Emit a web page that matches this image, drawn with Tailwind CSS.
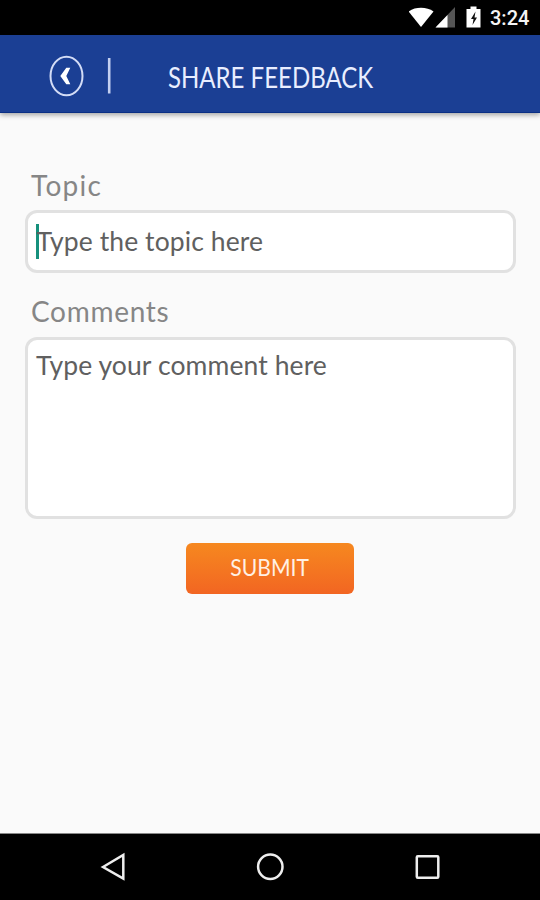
<!DOCTYPE html>
<html lang="en">
<head>
<meta charset="utf-8">
<title>Share Feedback</title>
<script src="https://cdn.jsdelivr.net/npm/@tailwindcss/browser@4"></script>
</head>
<body class="w-[540px] h-[900px] overflow-hidden flex flex-col bg-[#fafafa] font-['Lato',sans-serif]">
  <div class="h-[35px] shrink-0 bg-black flex items-start justify-end pr-[11px]">
    <svg class="w-[72px] h-[35px] mr-[9px]" viewBox="409 0 72 35">
      <path d="M408.500 11.500C415 6.500 427 6.500 433.500 11.500L421 27Z" fill="#fff"/>
      <path d="M455 7V27.500H435.500Z" fill="#555"/>
      <path d="M447.500 15V27.500H435.500Z" fill="#fff"/>
      <path d="M470.500 6.500h6v2.500h4v18.500h-14v-18.500h4z" fill="#fff"/>
      <path d="M475.500 11.500l-4.500 7.500h2.500l-1 6 4.500-7.500h-2.500z" fill="#111"/>
    </svg>
    <span class="w-[39px] font-['Roboto',sans-serif] font-medium text-[20px] leading-[36px] text-[#f4f4f4] whitespace-nowrap">3:24</span>
  </div>
  <header class="relative h-[78px] shrink-0 bg-[#1b3f94] border-b border-[#0b2f84] shadow-[0_2px_5px_rgba(0,0,0,0.35)] flex items-start">
    <svg class="w-[70px] h-[77px] ml-[45px]" viewBox="45 35 70 77" fill="none">
      <ellipse cx="66.500" cy="76" rx="16" ry="19.300" stroke="#d3dcf6" stroke-width="2"/>
      <path d="M60.300 76L66.300 67.700H70.300L66.300 76L70.300 84.300H66.300Z" fill="#fff"/>
      <path d="M109.200 58V93.500" stroke="#c3cff0" stroke-width="2.600"/>
    </svg>
    <h1 class="ml-[53px] mt-[21px] w-[206px] origin-left scale-x-[0.857] text-[28px] leading-[42px] text-[#e9eeff] whitespace-nowrap">SHARE FEEDBACK</h1>
  </header>
  <main class="flex-1 flex flex-col px-[25px] pt-[52px]">
    <label class="pl-[6px] h-[45px] text-[28px] leading-[40px] tracking-[1.3px] text-[#868686]">Topic</label>
    <div class="h-[63px] rounded-[12px] border-[3px] border-[#e1e1e1] bg-white flex items-center pl-[8px] w-[491px]">
      <span class="w-[2.500px] h-[35px] bg-[#16907c] shrink-0"></span>
      <span class="-ml-[2px] -mt-[2px] text-[26.500px] leading-[40px] tracking-[0.100px] text-[#606060] whitespace-nowrap">Type the topic here</span>
    </div>
    <label class="pl-[6px] pt-[18px] h-[64px] text-[28px] leading-[40px] tracking-[0.700px] text-[#868686]">Comments</label>
    <div class="h-[182px] rounded-[12px] border-[3px] border-[#e1e1e1] bg-white pl-[8px] pt-[5px] w-[491px]">
      <span class="text-[26.500px] leading-[40px] tracking-[0.100px] text-[#606060] whitespace-nowrap">Type your comment here</span>
    </div>
    <button class="mt-[24px] self-center w-[168px] h-[51px] rounded-[6px] bg-linear-to-b from-[#f6881f] to-[#f26522] flex justify-center text-[#fff0e4] text-[24px] leading-[48px]"><span class="scale-x-[0.88] whitespace-nowrap">SUBMIT</span></button>
  </main>
  <nav class="h-[67px] shrink-0 bg-black border-t border-[#888]">
    <svg class="w-[540px] h-[66px]" viewBox="0 834 540 66" fill="none" stroke="#eee" stroke-width="2.500">
      <path d="M103 867L123.300 855V878.500Z"/>
      <circle cx="270.300" cy="866.800" r="12.200"/>
      <rect x="416.800" y="856.200" width="21.500" height="21.500" rx="1"/>
    </svg>
  </nav>
</body>
</html>
